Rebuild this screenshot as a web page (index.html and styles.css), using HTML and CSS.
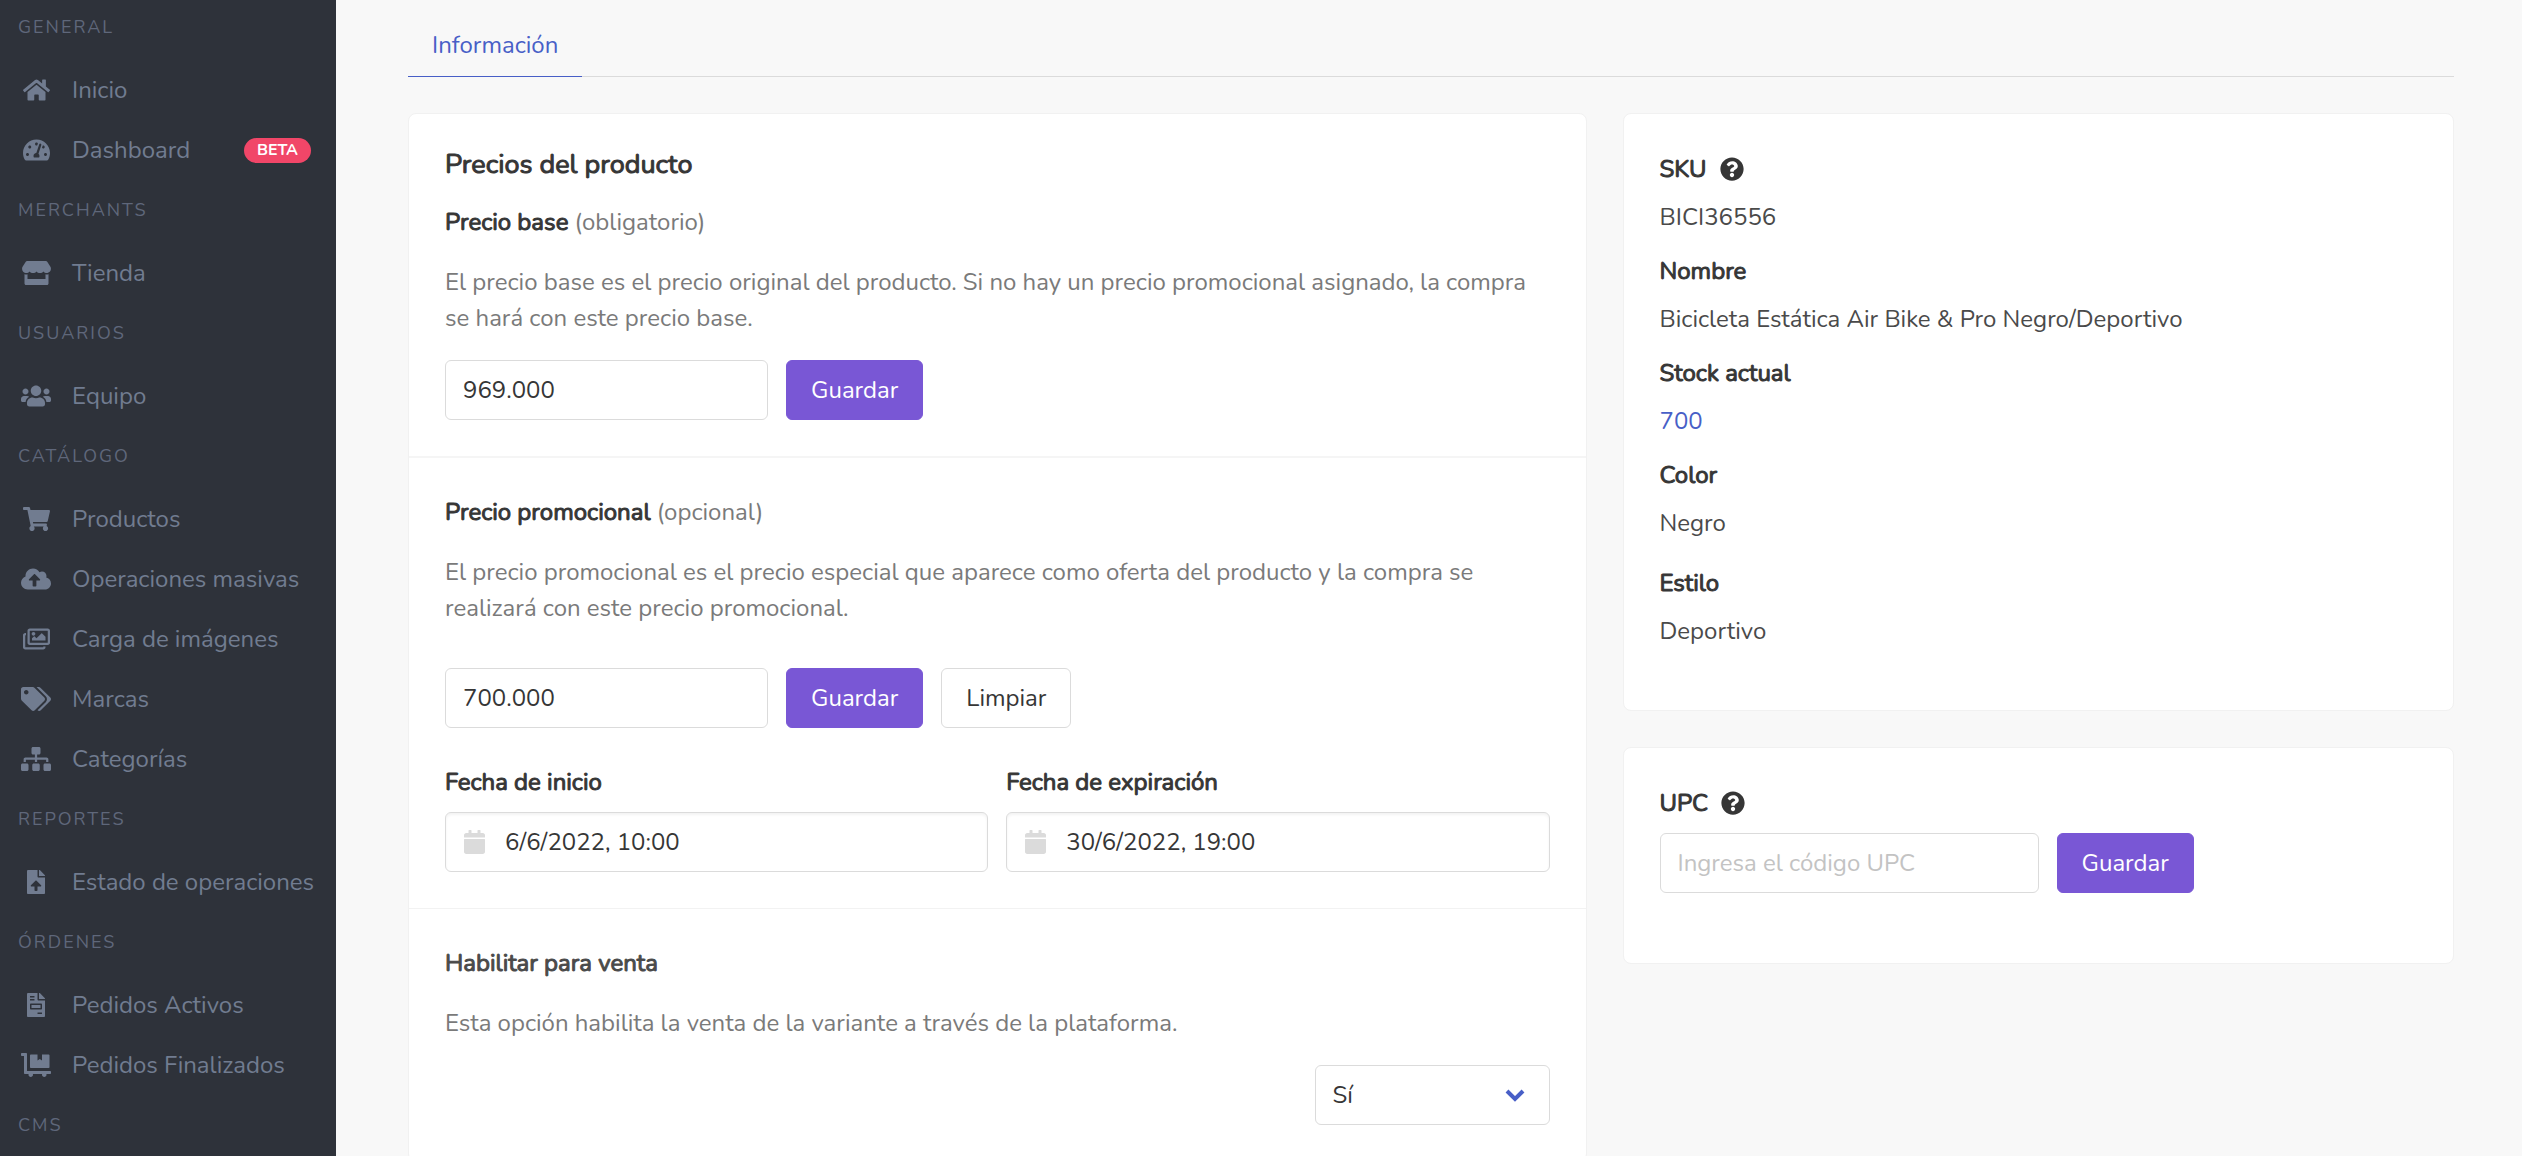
FILE: index.html
```html
<!DOCTYPE html>
<html lang="es">
<head>
<meta charset="utf-8">
<title>Producto</title>
<link rel="stylesheet" href="styles.css">
</head>
<body>
<div class="app">
  <aside class="sidebar">
    <nav aria-label="Principal">
      <h2 class="menu-label">General</h2>
      <ul class="menu-list">
        <li><a class="menu-link" href="#inicio"><span class="menu-icon"><svg class="icon" viewBox="0 0 576 512" width="27" height="24"><path d="M280.37 148.26L96 300.11V464a16 16 0 0 0 16 16l112.06-.29a16 16 0 0 0 15.92-16V368a16 16 0 0 1 16-16h64a16 16 0 0 1 16 16v95.64a16 16 0 0 0 16 16.05L464 480a16 16 0 0 0 16-16V300L295.67 148.26a12.19 12.19 0 0 0-15.3 0zM571.6 251.47L488 182.56V44.05a12 12 0 0 0-12-12h-56a12 12 0 0 0-12 12v72.61L318.47 43a48 48 0 0 0-61 0L4.34 251.47a12 12 0 0 0-1.6 16.9l25.5 31A12 12 0 0 0 45.15 301l235.22-193.74a12.19 12.19 0 0 1 15.3 0L530.9 301a12 12 0 0 0 16.9-1.6l25.5-31a12 12 0 0 0-1.7-16.93z"/></svg></span>Inicio</a></li>
        <li><a class="menu-link" href="#dashboard"><span class="menu-icon"><svg class="icon" viewBox="0 0 576 512" width="27" height="24"><path d="M288 32C128.94 32 0 160.94 0 320c0 52.8 14.25 102.26 39.06 144.8 5.61 9.62 16.3 15.2 27.44 15.2h443c11.14 0 21.83-5.58 27.44-15.2C561.75 422.26 576 372.8 576 320c0-159.06-128.94-288-288-288zm0 64c14.71 0 26.58 10.13 30.32 23.65-1.11 2.26-2.64 4.23-3.45 6.67l-9.22 27.67c-5.13 3.49-10.97 6.01-17.64 6.01-17.67 0-32-14.33-32-32S270.33 96 288 96zM96 384c-17.67 0-32-14.33-32-32s14.33-32 32-32 32 14.33 32 32-14.33 32-32 32zm48-160c-17.67 0-32-14.33-32-32s14.33-32 32-32 32 14.33 32 32-14.33 32-32 32zm246.77-72.41l-61.33 184C343.13 347.33 352 364.54 352 384c0 11.72-3.38 22.55-8.88 32H232.88c-5.5-9.45-8.88-20.28-8.88-32 0-33.94 26.5-61.43 59.9-63.59l61.34-184.01c4.17-12.56 17.73-19.45 30.36-15.17 12.57 4.19 19.35 17.79 15.17 30.36zm14.66 57.2l15.52-46.55c3.47-1.29 7.13-2.23 11.05-2.23 17.67 0 32 14.33 32 32s-14.33 32-32 32c-11.38-.01-20.89-6.28-26.57-15.22zM480 384c-17.67 0-32-14.33-32-32s14.33-32 32-32 32 14.33 32 32-14.33 32-32 32z"/></svg></span>Dashboard<span class="tag">BETA</span></a></li>
      </ul>
      <h2 class="menu-label">Merchants</h2>
      <ul class="menu-list">
        <li><a class="menu-link" href="#tienda"><span class="menu-icon"><svg class="icon" viewBox="0 0 616 512" width="29" height="24"><path d="M602 118.6L537.1 15C531.3 5.7 521 0 510 0H106C95 0 84.7 5.7 78.9 15L14 118.6c-33.5 53.5-3.8 127.9 58.8 136.4 4.5.6 9.1.9 13.7.9 29.6 0 55.8-13 73.8-33.1 18 20.1 44.3 33.1 73.8 33.1 29.6 0 55.8-13 73.8-33.1 18 20.1 44.3 33.1 73.8 33.1 29.6 0 55.8-13 73.8-33.1 18.1 20.1 44.3 33.1 73.8 33.1 4.7 0 9.2-.3 13.7-.9 62.8-8.4 92.6-82.8 59-136.4zM529.5 288c-10 0-19.9-1.5-29.5-3.8V384H116v-99.8c-9.6 2.2-19.5 3.8-29.5 3.8-6 0-12.1-.4-18-1.2-5.6-.8-11.1-2.1-16.4-3.6V480c0 17.7 14.3 32 32 32h448c17.7 0 32-14.3 32-32V283.2c-5.4 1.6-10.8 2.9-16.4 3.6-6.1.8-12.1 1.2-18.2 1.2z"/></svg></span>Tienda</a></li>
      </ul>
      <h2 class="menu-label">Usuarios</h2>
      <ul class="menu-list">
        <li><a class="menu-link" href="#equipo"><span class="menu-icon"><svg class="icon" viewBox="0 0 640 512" width="30" height="24"><path d="M96 224c35.3 0 64-28.7 64-64s-28.7-64-64-64-64 28.7-64 64 28.7 64 64 64zm448 0c35.3 0 64-28.7 64-64s-28.7-64-64-64-64 28.7-64 64 28.7 64 64 64zm32 32h-64c-17.6 0-33.5 7.1-45.1 18.6 40.3 22.1 68.9 62 75.1 109.4h66c17.7 0 32-14.3 32-32v-32c0-35.3-28.7-64-64-64zm-256 0c61.9 0 112-50.1 112-112S381.9 32 320 32 208 82.1 208 144s50.1 112 112 112zm76.8 32h-8.3c-20.8 10-43.9 16-68.5 16s-47.6-6-68.5-16h-8.3C179.6 288 128 339.6 128 403.2V432c0 26.5 21.5 48 48 48h288c26.5 0 48-21.5 48-48v-28.8c0-63.6-51.6-115.2-115.2-115.2zm-223.7-13.4C161.5 263.1 145.6 256 128 256H64c-35.3 0-64 28.7-64 64v32c0 17.7 14.3 32 32 32h65.9c6.3-47.4 34.9-87.3 75.2-109.4z"/></svg></span>Equipo</a></li>
      </ul>
      <h2 class="menu-label">Catálogo</h2>
      <ul class="menu-list">
        <li><a class="menu-link" href="#productos"><span class="menu-icon"><svg class="icon" viewBox="0 0 576 512" width="27" height="24"><path d="M528.12 301.319l47.273-208C578.806 78.301 567.391 64 551.99 64H159.208l-9.166-44.81C147.758 8.021 137.93 0 126.529 0H24C10.745 0 0 10.745 0 24v16c0 13.255 10.745 24 24 24h69.883l70.248 343.435C147.325 417.1 136 435.222 136 456c0 30.928 25.072 56 56 56s56-25.072 56-56c0-15.674-6.447-29.835-16.824-40h209.647C430.447 426.165 424 440.326 424 456c0 30.928 25.072 56 56 56s56-25.072 56-56c0-22.172-12.888-41.332-31.579-50.405l5.517-24.276c3.413-15.018-8.002-29.319-23.403-29.319H218.117l-6.545-32h293.145c11.206 0 20.92-7.754 23.403-18.681z"/></svg></span>Productos</a></li>
        <li><a class="menu-link" href="#operaciones"><span class="menu-icon"><svg class="icon" viewBox="0 0 640 512" width="30" height="24"><path d="M537.6 226.6c4.1-10.7 6.4-22.4 6.4-34.6 0-53-43-96-96-96-19.7 0-38.1 6-53.3 16.2C367 64.2 315.3 32 256 32c-88.4 0-160 71.6-160 160 0 2.7.1 5.4.2 8.1C40.2 219.8 0 273.2 0 336c0 79.5 64.5 144 144 144h368c70.7 0 128-57.3 128-128 0-61.9-44-113.6-102.4-125.4zM393.4 288H328v112c0 8.8-7.2 16-16 16h-48c-8.8 0-16-7.2-16-16V288h-65.4c-14.3 0-21.4-17.2-11.3-27.3l105.4-105.4c6.2-6.2 16.4-6.2 22.6 0l105.4 105.4c10.1 10.1 2.9 27.3-11.3 27.3z"/></svg></span>Operaciones masivas</a></li>
        <li><a class="menu-link" href="#imagenes"><span class="menu-icon"><svg class="icon" viewBox="0 0 576 512" width="27" height="24"><path d="M480 416v16c0 26.51-21.49 48-48 48H48c-26.51 0-48-21.49-48-48V176c0-26.51 21.49-48 48-48h16v48H54a6 6 0 0 0-6 6v244a6 6 0 0 0 6 6h372a6 6 0 0 0 6-6v-10h48zm42-336H150a6 6 0 0 0-6 6v244a6 6 0 0 0 6 6h372a6 6 0 0 0 6-6V86a6 6 0 0 0-6-6zm6-48c26.51 0 48 21.49 48 48v256c0 26.51-21.49 48-48 48H144c-26.51 0-48-21.49-48-48V80c0-26.51 21.49-48 48-48h384zM264 144c0 22.091-17.909 40-40 40s-40-17.909-40-40 17.909-40 40-40 40 17.909 40 40zm-72 96l39.515-39.515c4.686-4.686 12.284-4.686 16.971 0L288 240l103.515-103.515c4.686-4.686 12.284-4.686 16.971 0L480 208v80H192v-48z"/></svg></span>Carga de imágenes</a></li>
        <li><a class="menu-link" href="#marcas"><span class="menu-icon"><svg class="icon" viewBox="0 0 640 512" width="30" height="24"><path d="M497.941 225.941L286.059 14.059A48 48 0 0 0 252.118 0H48C21.49 0 0 21.49 0 48v204.118a48 48 0 0 0 14.059 33.941l211.882 211.882c18.744 18.745 49.136 18.746 67.882 0l204.118-204.118c18.745-18.745 18.745-49.137 0-67.882zM112 160c-26.51 0-48-21.49-48-48s21.49-48 48-48 48 21.49 48 48-21.49 48-48 48zm513.941 133.823L421.823 497.941c-18.745 18.745-49.137 18.745-67.882 0l-.36-.36L527.64 323.522c16.999-16.999 26.36-39.6 26.36-63.64s-9.362-46.641-26.36-63.64L331.397 0h48.721a48 48 0 0 1 33.941 14.059l211.882 211.882c18.745 18.745 18.745 49.137 0 67.882z"/></svg></span>Marcas</a></li>
        <li><a class="menu-link" href="#categorias"><span class="menu-icon"><svg class="icon" viewBox="0 0 640 512" width="30" height="24"><path d="M128 352H32c-17.67 0-32 14.33-32 32v96c0 17.67 14.33 32 32 32h96c17.67 0 32-14.33 32-32v-96c0-17.67-14.33-32-32-32zm-24-80h192v48h48v-48h192v48h48v-57.59c0-21.17-17.23-38.41-38.41-38.41H344v-64h40c17.67 0 32-14.33 32-32V32c0-17.67-14.33-32-32-32H256c-17.67 0-32 14.33-32 32v96c0 17.67 14.33 32 32 32h40v64H94.41C73.23 224 56 241.23 56 262.41V320h48v-48zm264 80h-96c-17.67 0-32 14.33-32 32v96c0 17.67 14.33 32 32 32h96c17.67 0 32-14.33 32-32v-96c0-17.67-14.33-32-32-32zm240 0h-96c-17.67 0-32 14.33-32 32v96c0 17.67 14.33 32 32 32h96c17.67 0 32-14.33 32-32v-96c0-17.67-14.33-32-32-32z"/></svg></span>Categorías</a></li>
      </ul>
      <h2 class="menu-label">Reportes</h2>
      <ul class="menu-list">
        <li><a class="menu-link" href="#estado"><span class="menu-icon"><svg class="icon" viewBox="0 0 384 512" width="18" height="24"><path d="M224 136V0H24C10.7 0 0 10.7 0 24v464c0 13.3 10.7 24 24 24h336c13.3 0 24-10.7 24-24V160H248c-13.2 0-24-10.8-24-24zm65.18 216.01H224v80c0 8.84-7.16 16-16 16h-32c-8.84 0-16-7.16-16-16v-80H94.82c-14.28 0-21.41-17.29-11.27-27.36l96.42-95.7c6.65-6.61 17.39-6.61 24.04 0l96.42 95.7c10.15 10.07 3.03 27.36-11.25 27.36zM377 105L279.1 7c-4.5-4.5-10.6-7-17-7H256v128h128v-6.1c0-6.3-2.5-12.4-7-16.9z"/></svg></span>Estado de operaciones</a></li>
      </ul>
      <h2 class="menu-label">Órdenes</h2>
      <ul class="menu-list">
        <li><a class="menu-link" href="#activos"><span class="menu-icon"><svg class="icon" viewBox="0 0 384 512" width="18" height="24"><path d="M288 256H96v64h192v-64zm89-151L279.1 7c-4.5-4.5-10.6-7-17-7H256v128h128v-6.1c0-6.3-2.5-12.4-7-16.9zm-153 31V0H24C10.7 0 0 10.7 0 24v464c0 13.3 10.7 24 24 24h336c13.3 0 24-10.7 24-24V160H248c-13.2 0-24-10.8-24-24zM64 72c0-4.42 3.58-8 8-8h80c4.42 0 8 3.58 8 8v16c0 4.42-3.58 8-8 8H72c-4.42 0-8-3.58-8-8V72zm0 64c0-4.42 3.58-8 8-8h80c4.42 0 8 3.58 8 8v16c0 4.42-3.58 8-8 8H72c-4.42 0-8-3.58-8-8v-16zm256 304c0 4.42-3.58 8-8 8h-80c-4.42 0-8-3.58-8-8v-16c0-4.42 3.58-8 8-8h80c4.42 0 8 3.58 8 8v16zm0-200v96c0 8.84-7.16 16-16 16H80c-8.84 0-16-7.16-16-16v-96c0-8.84 7.16-16 16-16h224c8.84 0 16 7.16 16 16z"/></svg></span>Pedidos Activos</a></li>
        <li><a class="menu-link" href="#finalizados"><span class="menu-icon"><svg class="icon" viewBox="0 0 640 512" width="30" height="24"><path d="M208 320h384c8.8 0 16-7.2 16-16V48c0-8.8-7.2-16-16-16H448v128l-48-32-48 32V32H208c-8.8 0-16 7.2-16 16v256c0 8.8 7.2 16 16 16zm416 64H128V16c0-8.8-7.2-16-16-16H16C7.2 0 0 7.2 0 16v32c0 8.8 7.2 16 16 16h48v368c0 8.8 7.2 16 16 16h82.9c-1.8 5-2.9 10.4-2.9 16 0 26.5 21.5 48 48 48s48-21.5 48-48c0-5.6-1.2-11-2.9-16H451c-1.8 5-2.9 10.4-2.9 16 0 26.5 21.5 48 48 48s48-21.5 48-48c0-5.6-1.2-11-2.9-16H624c8.8 0 16-7.2 16-16v-32c0-8.8-7.2-16-16-16z"/></svg></span>Pedidos Finalizados</a></li>
      </ul>
      <h2 class="menu-label">CMS</h2>
    </nav>
  </aside>

  <main class="main">
    <nav class="tabs" aria-label="Secciones">
      <a class="tab" href="#informacion" aria-current="page">Información</a>
    </nav>

    <div class="columns">
      <div class="card prices">
        <section class="section">
          <h1 class="title">Precios del producto</h1>
          <label class="label" for="base">Precio base <span class="hint">(obligatorio)</span></label>
          <p class="help">El precio base es el precio original del producto. Si no hay un precio promocional asignado, la compra se hará con este precio base.</p>
          <div class="controls">
            <input class="input price" id="base" type="text" value="969.000">
            <button class="button primary" type="button">Guardar</button>
          </div>
        </section>

        <section class="section promo">
          <label class="label" for="promo">Precio promocional <span class="hint">(opcional)</span></label>
          <p class="help">El precio promocional es el precio especial que aparece como oferta del producto y la compra se realizará con este precio promocional.</p>
          <div class="controls spaced">
            <input class="input price" id="promo" type="text" value="700.000">
            <button class="button primary" type="button">Guardar</button>
            <button class="button" type="button">Limpiar</button>
          </div>
          <div class="dates">
            <div class="field">
              <label class="label" for="start">Fecha de inicio</label>
              <div class="date">
                <svg class="icon date-icon" viewBox="0 0 448 512" width="21" height="24"><path d="M12 192h424c6.6 0 12 5.4 12 12v260c0 26.5-21.5 48-48 48H48c-26.5 0-48-21.5-48-48V204c0-6.6 5.4-12 12-12zm436-44v-36c0-26.5-21.5-48-48-48h-48V12c0-6.6-5.4-12-12-12h-40c-6.6 0-12 5.4-12 12v52H160V12c0-6.6-5.4-12-12-12h-40c-6.6 0-12 5.4-12 12v52H48C21.5 64 0 85.5 0 112v36c0 6.6 5.4 12 12 12h424c6.6 0 12-5.4 12-12z"/></svg>
                <input class="date-input" id="start" type="text" value="6/6/2022, 10:00">
              </div>
            </div>
            <div class="field">
              <label class="label" for="end">Fecha de expiración</label>
              <div class="date">
                <svg class="icon date-icon" viewBox="0 0 448 512" width="21" height="24"><path d="M12 192h424c6.6 0 12 5.4 12 12v260c0 26.5-21.5 48-48 48H48c-26.5 0-48-21.5-48-48V204c0-6.6 5.4-12 12-12zm436-44v-36c0-26.5-21.5-48-48-48h-48V12c0-6.6-5.4-12-12-12h-40c-6.6 0-12 5.4-12 12v52H160V12c0-6.6-5.4-12-12-12h-40c-6.6 0-12 5.4-12 12v52H48C21.5 64 0 85.5 0 112v36c0 6.6 5.4 12 12 12h424c6.6 0 12-5.4 12-12z"/></svg>
                <input class="date-input" id="end" type="text" value="30/6/2022, 19:00">
              </div>
            </div>
          </div>
        </section>

        <section class="section enable">
          <label class="label soft" for="enabled">Habilitar para venta</label>
          <p class="help">Esta opción habilita la venta de la variante a través de la plataforma.</p>
          <div class="select">
            <select class="input" id="enabled"><option>Sí</option><option>No</option></select>
            <svg class="chevron" viewBox="0 0 20 14" width="20" height="14"><path d="M2 2l8 8 8-8"/></svg>
          </div>
        </section>
      </div>

      <div class="side">
        <div class="card details">
          <dl class="facts">
            <div class="fact"><dt class="label">SKU<svg class="icon help-icon" viewBox="0 0 512 512" width="24" height="24"><path d="M504 256c0 136.997-111.043 248-248 248S8 392.997 8 256C8 119.083 119.043 8 256 8s248 111.083 248 248zM262.655 90c-54.497 0-89.255 22.957-116.549 63.758-3.536 5.286-2.353 12.415 2.715 16.258l34.699 26.31c5.205 3.947 12.621 3.008 16.665-2.122 17.864-22.658 30.113-35.797 57.303-35.797 20.429 0 45.698 13.148 45.698 32.958 0 14.976-12.363 22.667-32.534 33.976C247.128 238.528 216 254.941 216 296v4c0 6.627 5.373 12 12 12h56c6.627 0 12-5.373 12-12v-1.333c0-28.462 83.186-29.647 83.186-106.667 0-58.002-60.165-102-116.531-102zM256 338c-25.365 0-46 20.635-46 46 0 25.364 20.635 46 46 46s46-20.636 46-46c0-25.364-20.635-46-46-46z"/></svg></dt><dd>BICI36556</dd></div>
            <div class="fact"><dt class="label">Nombre</dt><dd>Bicicleta Estática Air Bike &amp; Pro Negro/Deportivo</dd></div>
            <div class="fact"><dt class="label">Stock actual</dt><dd><a class="link" href="#stock">700</a></dd></div>
            <div class="fact"><dt class="label">Color</dt><dd>Negro</dd></div>
            <div class="fact attribute"><dt class="label">Estilo</dt><dd>Deportivo</dd></div>
          </dl>
        </div>
        <div class="card upc">
          <label class="label" for="upc">UPC<svg class="icon help-icon" viewBox="0 0 512 512" width="24" height="24"><path d="M504 256c0 136.997-111.043 248-248 248S8 392.997 8 256C8 119.083 119.043 8 256 8s248 111.083 248 248zM262.655 90c-54.497 0-89.255 22.957-116.549 63.758-3.536 5.286-2.353 12.415 2.715 16.258l34.699 26.31c5.205 3.947 12.621 3.008 16.665-2.122 17.864-22.658 30.113-35.797 57.303-35.797 20.429 0 45.698 13.148 45.698 32.958 0 14.976-12.363 22.667-32.534 33.976C247.128 238.528 216 254.941 216 296v4c0 6.627 5.373 12 12 12h56c6.627 0 12-5.373 12-12v-1.333c0-28.462 83.186-29.647 83.186-106.667 0-58.002-60.165-102-116.531-102zM256 338c-25.365 0-46 20.635-46 46 0 25.364 20.635 46 46 46s46-20.636 46-46c0-25.364-20.635-46-46-46z"/></svg></label>
          <div class="controls">
            <input class="input code" id="upc" type="text" placeholder="Ingresa el código UPC">
            <button class="button primary" type="button">Guardar</button>
          </div>
        </div>
      </div>
    </div>
  </main>
</div>
</body>
</html>
```
FILE: styles.css
```css
* { box-sizing: border-box; }

body {
  margin: 0;
  background: #f8f8f8;
  color: #4a4a4a;
  font: 400 24px/36px Nunito, Lato, "Open Sans", sans-serif;
}

h1, h2, p, ul, dl, dd { margin: 0; padding: 0; }
ul { list-style: none; }
input, select, button { font: inherit; color: #363636; }
.icon { display: block; fill: currentColor; }

.app { display: flex; min-height: 100vh; }

/* Sidebar */
.sidebar { flex: 0 0 336px; background: #2e323a; }
.menu-label {
  padding: 16px 18px 19px;
  color: #5f677a;
  font-size: 18px;
  font-weight: 400;
  line-height: 28px;
  letter-spacing: 2px;
  text-transform: uppercase;
}
.menu-label:first-child { padding-top: 13px; }
.menu-link {
  display: flex;
  align-items: center;
  height: 60px;
  padding: 0 18px;
  color: #717c90;
  text-decoration: none;
  white-space: nowrap;
}
.menu-icon { display: flex; justify-content: center; width: 36px; margin-right: 18px; }
.tag {
  margin: 0 7px 0 auto;
  padding: 0 13px;
  border-radius: 13px;
  background: #f14668;
  color: #fff;
  font-size: 16px;
  font-weight: 700;
  line-height: 25px;
}

/* Tabs */
.main { flex: 1; min-width: 0; padding: 15px 68px 0 72px; }
.tabs { display: flex; margin-bottom: 36px; border-bottom: 1px solid #dbdbdb; }
.tab {
  margin-bottom: -1px;
  padding: 12px 24px 13px;
  border-bottom: 1px solid #485fc7;
  color: #485fc7;
  text-decoration: none;
}

/* Cards */
.columns {
  display: grid;
  grid-template-columns: repeat(12, minmax(0, 1fr));
  gap: 36px;
  align-items: start;
}
.prices { grid-column: span 7; }
.side { grid-column: span 5; display: grid; gap: 36px; }
.card { border: 1px solid #f1f1f1; border-radius: 8px; background: #fff; }
.section { padding: 36px; }
.promo { border-top: 2px solid #f5f5f5; }
.enable { border-top: 1px solid #f2f2f2; }

/* Headings and labels thicken the regular weight with a hairline stroke */
.title, .label { color: #363636; font-weight: 400; -webkit-text-stroke: 1px; }
.title { margin-bottom: 24px; font-size: 27px; line-height: 30px; }
.label { display: block; }
.label.soft { color: #4a4a4a; }
.hint { color: #7a7a7a; -webkit-text-stroke: 0; }
.help { margin: 24px 0; color: #7a7a7a; }

/* Controls */
.controls { display: flex; gap: 18px; }
.controls.spaced { margin-top: 42px; }
.input {
  height: 60px;
  padding: 0 17px;
  border: 1px solid #dbdbdb;
  border-radius: 6px;
  background: #fff;
}
.input::placeholder { color: #c3c3c3; opacity: 1; }
.price { width: 323px; }
.code { width: 379px; }
.button {
  height: 60px;
  padding: 0 24px;
  border: 1px solid #dbdbdb;
  border-radius: 6px;
  background: #fff;
}
.button.primary { border-color: #7957d5; background: #7957d5; color: #fff; }

.dates { display: grid; grid-template-columns: 1fr 1fr; gap: 18px; margin-top: 36px; }
.field { display: grid; gap: 12px; }
.date {
  display: flex;
  align-items: center;
  gap: 20px;
  height: 60px;
  padding: 0 18px;
  border: 1px solid #dbdbdb;
  border-radius: 6px;
  box-shadow: inset 0 2px 3px rgba(10, 10, 10, .05);
}
.date-icon { color: #dbdbdb; }
.date-input { flex: 1; min-width: 0; padding: 0; border: 0; background: none; }

.select { position: relative; width: 235px; margin-left: auto; }
.select .input { width: 100%; appearance: none; }
.chevron {
  position: absolute;
  top: 24px;
  right: 25px;
  fill: none;
  stroke: #485fc7;
  stroke-width: 4;
  pointer-events: none;
}

/* Side column */
.details { padding: 37px 36px 61px; }
.facts { display: grid; gap: 18px; }
.fact { display: grid; gap: 12px; }
.attribute { margin-top: 6px; }
.link { color: #485fc7; text-decoration: none; }
.help-icon { display: inline-block; margin-left: 13px; vertical-align: -4px; }
.upc { display: grid; gap: 12px; padding: 37px 36px 70px; }
```
